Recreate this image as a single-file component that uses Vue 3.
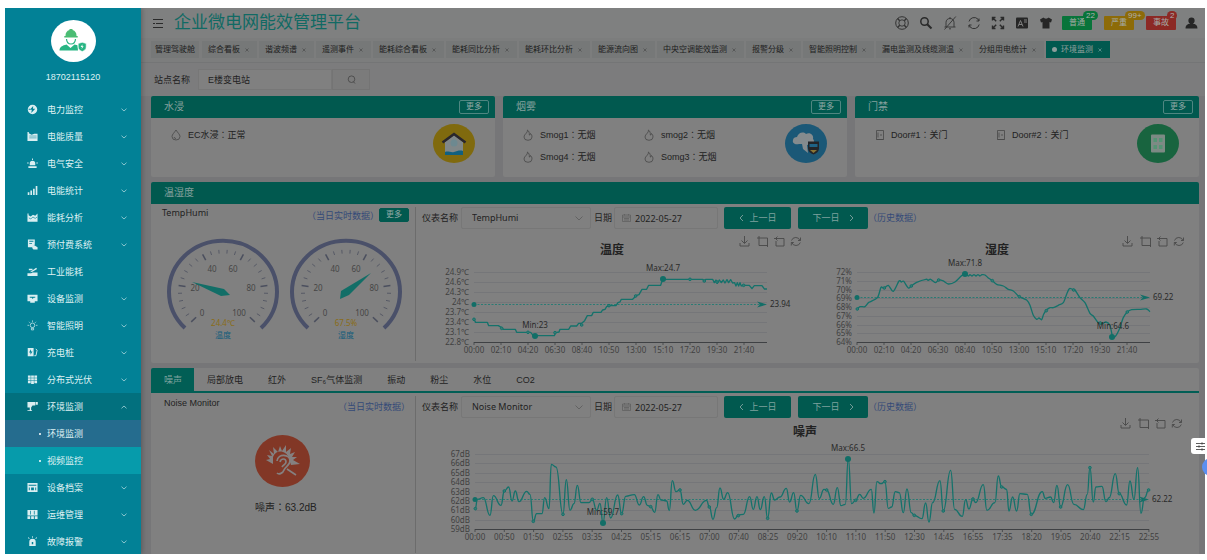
<script setup>
import { ref } from 'vue'

const menu = [
  { name: '电力监控', icon: 'bolt', fold: 'down' },
  { name: '电能质量', icon: 'quality', fold: 'down' },
  { name: '电气安全', icon: 'siren', fold: 'down' },
  { name: '电能统计', icon: 'bars', fold: 'down' },
  { name: '能耗分析', icon: 'trend', fold: 'down' },
  { name: '预付费系统', icon: 'prepay', fold: 'down' },
  { name: '工业能耗', icon: 'factory' },
  { name: '设备监测', icon: 'monitor', fold: 'down' },
  { name: '智能照明', icon: 'lamp', fold: 'down' },
  { name: '充电桩', icon: 'charger', fold: 'down' },
  { name: '分布式光伏', icon: 'solar', fold: 'down' },
  { name: '环境监测', icon: 'camera', fold: 'up', open: true, children: ['环境监测', '视频监控'] },
  { name: '设备档案', icon: 'archive', fold: 'down' },
  { name: '运维管理', icon: 'ops', fold: 'down' },
  { name: '故障报警', icon: 'alarm', fold: 'down' }
]

const icons = {
  bolt: '<path fill-rule="evenodd" d="M6 .8a5.2 5.2 0 1 1 0 10.400a5.200 5.200 0 0 1 0-10.400M6.800 2.200L3 6.400h2.300L4.600 9.800L9 5.300H6.500zM1.800 5.200h1.600v1H1.800z"/>',
  quality: '<path d="M.5 1h1.500v1.500L5 4l3-1h3.500v8H.5z"/><path d="M2.500 5.500h8M2.500 7.500h8" stroke="#028196" stroke-width=".6"/>',
  siren: '<path d="M3 8V6a3 3 0 0 1 6 0v2zM1.500 9h9v2h-9zM5.500.5h1v1.600h-1zM.2 5h1.600v1H.2zM10.200 5h1.600v1h-1.600z"/>',
  bars: '<path d="M.8 8h1.800v3H.8zM3.700 6h1.800v5H3.700zM6.600 4h1.800v7H6.600zM9.500 1h1.800v10H9.500z"/>',
  trend: '<path d="M.5 1.500h1.200v2L4 5l2.500-2L9 4l2.500-2.500V10.500H.5z"/><path d="M2 6.500l2.200 1 2.300-2L9 7l2-1.500" stroke="#028196" stroke-width=".7" fill="none"/>',
  prepay: '<path fill-rule="evenodd" d="M1 .5h7.500v5.600L6 9H1zM2.500 2v1h4.500V2zM2.500 4.500v1h3v-1z"/><path d="M7.500 6.500L11.500 9v2.500H7L5.500 9.500z"/>',
  factory: '<path d="M.5 11V8h4l1.500-1h5.500v4zM3 6.800L10 2l1 1.200-5 3.200zM2 3h4v1.500H2z"/>',
  monitor: '<path fill-rule="evenodd" d="M.5 2h11v7h-3v1.500h-5V9h-3zM3 4.200v1h2.200l1 1.300 1-1.300H9v-1z"/>',
  lamp: '<g fill="none" stroke="#d9eef1" stroke-width=".8"><circle cx="6" cy="5.800" r="2.500"/><path d="M4.800 9h2.400v1.800H4.800zM6 .5v1.500M.6 5.800h1.500M9.900 5.800h1.500M2.200 2l1 1M9.800 2l-1 1"/></g>',
  charger: '<path fill-rule="evenodd" d="M.8 1h6.400v9H.8zM4.200 2.500L2.300 6h1.500v2.500L6 5H4.500z"/><path d="M8 9.500h1.800L11 3.500 9.500 2" fill="none" stroke="#d9eef1"/>',
  solar: '<path d="M1 1.500h3v2.500H1zM4.500 1.500h3v2.500h-3zM8 1.500h3v2.500H8zM1 4.500h3v2.500H1zM4.500 4.500h3v2.500h-3zM8 4.500h3v2.500H8zM1 7.500h3V10H1zM4.500 7.500h3v3.500h-3zM8 7.500h3V10H8z"/>',
  camera: '<path d="M.5 1h8.500v4H6L4.500 7v4H3V7H.5zM9.500 1h2.300v3H9.500zM.5 10h5v1h-5z"/>',
  archive: '<path fill-rule="evenodd" d="M.5 1h11v10H.5zM1.800 3v1h8.400V3zM2 6v3h1V6zM4.500 6v3h3V6zM9 6v3h1V6z"/>',
  ops: '<path fill-rule="evenodd" d="M.5 1h11v6H.5zM3.500 2v4h.8V2zM7.500 2v4h.8V2zM.5 8h3v3h-3zM4.500 8h3v3h-3zM8.500 8h3v3h-3z"/>',
  alarm: '<path fill-rule="evenodd" d="M2.500 10.800V6.500a3.500 3.500 0 0 1 7 0v4.300zM5.200 6.500v2.600h1.600V6.500zM5.600.3h.9v1.700h-.9zM1 2l.7-.6 1.200 1.200-.7.6zM11 2l-.7-.6-1.200 1.200.7.6z"/>'
}

const pages = ['管理驾驶舱', '综合看板', '谐波频谱', '遥测事件', '能耗综合看板', '能耗同比分析', '能耗环比分析', '能源流向图', '中央空调能效监测', '报警分级', '智能照明控制', '漏电监测及线缆测温', '分组用电统计', '环境监测']

const alerts = [
  { name: '普通', count: '22', tone: 'green' },
  { name: '严重', count: '99+', tone: 'amber' },
  { name: '事故', count: '2', tone: 'red' }
]

const cards = [
  { title: '水浸', kind: 'drop', items: ['EC水浸：正常'] },
  { title: '烟雾', kind: 'flame', items: ['Smog1：无烟', 'smog2：无烟', 'Smog4：无烟', 'Somg3：无烟'] },
  { title: '门禁', kind: 'door', items: ['Door#1：关门', 'Door#2：关门'] }
]

const kinds = ['噪声', '局部放电', '红外', 'SF₆气体监测', '振动', '粉尘', '水位', 'CO2']

const station = ref('E楼变电站')
const meter = ref('TempHumi')
const noiseMeter = ref('Noise Monitor')
const day = ref('2022-05-27')
const noiseDay = ref('2022-05-27')

const polar = (deg, r) => {
  const a = (deg * Math.PI) / 180
  return [(62 + Math.cos(a) * r).toFixed(1), (58 - Math.sin(a) * r * 0.94).toFixed(1)]
}
const ticks = Array.from({ length: 26 }, (_, i) => {
  const deg = 225 - i * 10.8
  const major = i % 5 === 0
  const [x1, y1] = polar(deg, 45)
  const [x2, y2] = polar(deg, major ? 38 : 41)
  return { x1, y1, x2, y2, major }
})
const gaugeLabels = [['0', 41, 82], ['20', 34, 57], ['40', 51, 38], ['60', 72, 38], ['80', 90, 57], ['100', 78, 82]]
const gauges = [
  { name: '温度', value: '24.4℃', needle: '31,48 63,55 69,61 60,62' },
  { name: '湿度', value: '67.5%', needle: '87,39 65,61 56,65 57,57' }
]

const stepPath = 'M192,430 L197,439 H232 L236,449 H265 L275,455 L280,460 H316 L320,469 H362 L370,479 H433 L437,470 L447,468 L450,460 H476 L482,450 H500 L506,442 L515,442 L524,434 L532,419 H545 L550,409 H573 L578,402 L585,400 L590,392 L597,389 H618 L624,380 L630,378 L634,370 H668 L680,358 L687,356 L696,340 H710 L716,328 H752 L758,310 H878 L883,314 L888,310 H908 L913,320 L918,312 L922,322 L928,312 L934,320 L940,312 L945,321 L951,311 L956,320 L962,311 L968,321 L974,320 L978,330 L982,320 L986,330 L990,320 L994,330 L1000,328 H1018 L1026,338 L1033,329 H1056 L1063,339 H1071'

function curve(p) {
  let d = `M${p[0]}`
  for (let i = 0; i < p.length - 1; i++) {
    const a = p[i - 1] || p[i], b = p[i], c = p[i + 1], e = p[i + 2] || c
    d += ` C${b[0] + (c[0] - a[0]) / 7},${b[1] + (c[1] - a[1]) / 7} ${c[0] - (e[0] - b[0]) / 7},${c[1] - (e[1] - b[1]) / 7} ${c}`
  }
  return d
}
function wave(p) {
  let d = `M${p[0]}`
  for (let i = 1; i < p.length; i++) {
    const m = (p[i - 1][0] + p[i][0]) / 2
    d += ` C${m},${p[i - 1][1]} ${m},${p[i][1]} ${p[i]}`
  }
  return d
}

const humidity = [[172,399],[180,392],[195,392],[205,380],[212,377],[233,364],[243,334],[252,337],[265,328],[280,346],[297,315],[304,318],[311,316],[325,336],[334,330],[350,319],[378,310],[384,313],[392,310],[406,320],[416,312],[430,315],[445,324],[465,318],[485,299],[496,295],[505,300],[510,296],[516,300],[522,296],[528,300],[534,296],[540,300],[546,296],[555,297],[564,305],[577,314],[590,325],[610,330],[625,340],[640,345],[658,362],[680,372],[690,388],[700,418],[710,430],[717,426],[725,431],[731,415],[739,403],[750,395],[760,395],[775,388],[790,380],[800,355],[808,338],[818,340],[825,342],[840,365],[855,380],[870,412],[880,420],[893,438],[905,444],[918,438],[930,448],[938,483],[947,480],[958,460],[970,425],[982,408],[995,401],[1020,400],[1040,399],[1050,407]]
const noise = [[136,443],[142,415],[160,410],[180,463],[190,404],[213,433],[223,390],[236,378],[246,420],[256,390],[267,422],[290,391],[300,400],[310,481],[320,458],[336,458],[344,410],[357,443],[364,310],[378,318],[399,460],[409,356],[420,448],[432,428],[442,373],[453,425],[477,425],[487,415],[500,448],[510,427],[519,486],[530,410],[542,471],[563,402],[575,458],[587,406],[613,401],[628,432],[641,407],[652,433],[662,437],[674,454],[684,401],[693,417],[710,420],[718,449],[727,359],[738,392],[750,387],[760,430],[772,418],[796,448],[830,418],[838,438],[849,475],[860,440],[870,381],[881,415],[893,395],[914,474],[925,462],[940,460],[959,407],[970,445],[981,407],[991,446],[1003,407],[1013,472],[1024,396],[1034,417],[1050,408],[1069,382],[1079,423],[1091,395],[1101,450],[1112,403],[1137,428],[1156,340],[1168,412],[1182,385],[1190,387],[1210,430],[1222,380],[1233,434],[1246,430],[1255,293],[1265,428],[1277,418],[1289,400],[1300,412],[1324,385],[1332,456],[1341,362],[1353,368],[1365,362],[1375,442],[1385,438],[1396,392],[1408,395],[1420,455],[1431,384],[1444,455],[1453,463],[1476,473],[1487,426],[1497,483],[1508,425],[1530,359],[1540,450],[1562,328],[1574,445],[1597,466],[1607,416],[1617,444],[1629,414],[1637,425],[1660,371],[1671,448],[1695,425],[1705,345],[1715,377],[1730,385],[1737,450],[1748,408],[1760,450],[1770,398],[1792,400],[1804,460],[1837,392],[1846,412],[1862,408],[1871,425],[1881,373],[1892,438],[1913,371],[1932,430],[1960,446],[1972,400],[1980,320],[1990,423],[1998,378],[2016,376],[2028,422],[2038,410],[2056,338],[2068,398],[2090,432],[2100,360],[2112,415],[2123,320],[2133,457],[2144,410],[2156,387]]

const hours = ['00:00', '02:10', '04:20', '06:30', '08:40', '10:50', '13:00', '15:10', '17:20', '19:30', '21:40']
const noiseHours = ['00:00', '00:50', '01:50', '02:55', '03:35', '04:25', '05:15', '06:15', '07:00', '07:40', '08:25', '09:20', '10:10', '11:10', '11:50', '12:30', '14:45', '16:55', '17:35', '18:20', '19:05', '20:40', '22:15', '22:55']

const charts = [
  {
    title: '温度', width: 383, height: 132, titleX: 191, titleY: 22, toolX: 318, toolY: 4,
    left: 53, right: 346, top: 40, bottom: 110, marks: ['24.9℃', '24.6℃', '24.3℃', '24℃', '23.7℃', '23.4℃', '23.1℃', '22.8℃'], labelX: 48,
    xs: hours, pitch: 27, avgY: 72, avg: '23.94', shift: 'translate(-11 -56) scale(0.3333)', path: stepPath,
    dots: [[192,430],[275,457],[354,469],[435,470],[515,447],[597,389],[677,360],[840,310],[883,315],[921,318],[1001,328]],
    max: { x: 242, y: 47, tx: 242, ty: 39, text: 'Max:24.7' }, min: { x: 114, y: 104, tx: 114, ty: 96, text: 'Min:23' }
  },
  {
    title: '湿度', width: 383, height: 132, titleX: 193, titleY: 22, toolX: 318, toolY: 4,
    left: 53, right: 346, top: 40, bottom: 110, marks: ['72%', '71%', '70%', '69%', '68%', '67%', '66%', '65%', '64%'], labelX: 48,
    xs: hours, pitch: 27, avgY: 65, avg: '69.22', shift: 'translate(-4 -56) scale(0.3333)', path: curve(humidity),
    dots: [[172,399],[253,336],[334,330],[416,312],[577,314],[658,362],[739,404],[821,342],[901,441],[982,408]],
    max: { x: 161, y: 42, tx: 161, ty: 34, text: 'Max:71.8' }, min: { x: 308, y: 105, tx: 309, ty: 97, text: 'Min:64.6' }
  }
]
const noiseChart = {
  title: '噪声', width: 766, height: 137, titleX: 384, titleY: 18, toolX: 699, toolY: 0,
  left: 54, right: 728, top: 36, bottom: 111, marks: ['67dB', '66dB', '65dB', '64dB', '63dB', '62dB', '61dB', '60dB', '59dB'], labelX: 49,
  xs: noiseHours, pitch: 29.3, avgY: 81, avg: '62.22', shift: 'translate(9 -57) scale(0.3333)', path: wave(noise),
  dots: [[136,443],[223,390],[310,481],[399,460],[487,415],[575,458],[662,437],[750,387],[838,438],[925,464],[1013,472],[1101,450],[1190,387],[1277,418],[1365,362],[1453,463],[1540,450],[1629,414],[1715,378],[1804,460],[1892,438],[1980,320],[2068,398],[2156,387]],
  max: { x: 427, y: 41, tx: 427, ty: 33, text: 'Max:66.5' }, min: { x: 182, y: 105, tx: 182, ty: 97, text: 'Min:59.7' }
}
const rows = [
  { key: 'temp', charts },
  { key: 'noise', charts: [noiseChart] }
]
const gridY = (c, i) => Math.round(c.top + ((c.bottom - c.top) * i) / (c.marks.length - 1)) + 0.5
</script>

<template>
  <div class="screen">
    <div class="app">
      <aside class="side">
        <div class="avatar">
          <svg viewBox="0 0 30 26" width="30" height="26">
            <g fill="#27b583">
              <path d="M7.500 8a5.500 6 0 0 1 4-6V1h3v1a5.500 6 0 0 1 4 6h1.200v1.500H6.300V8z" fill="#4bbd74" />
              <path d="M8.500 11c.2 3 2 5 4.500 5s4.300-2 4.500-5" fill="none" stroke="#27b583" stroke-width="1.200" />
              <path d="M1.500 22.500c0-3.500 3-5 7-6l4 3.500 4-3.500 3 .8.500 5.200z" />
              <path d="M20.200 15.500l4-1.200 4 1.200v3.500c0 2.500-2 3.700-4 4.500-2-.8-4-2-4-4.500z" stroke="#fff" stroke-width=".6" />
            </g>
            <path d="M24.500 16.300l-1.900 2.700h1.400l-.4 2 2-2.700h-1.300z" fill="#fff" />
          </svg>
        </div>
        <div class="phone">18702115120</div>
        <nav class="menu">
          <template v-for="m in menu" :key="m.name">
            <a href="#" class="entry" :class="{ open: m.open }">
              <svg class="glyph" viewBox="0 0 12 12" v-html="icons[m.icon]"></svg>
              <span>{{ m.name }}</span>
              <svg v-if="m.fold" class="fold" :class="m.fold" viewBox="0 0 6 4"><path d="M.5 .7L3 3L5.500 .7" /></svg>
            </a>
            <a v-for="(c, i) in m.children || []" :key="c" href="#" class="entry sub" :class="i ? 'hover' : 'current'">
              <i class="bullet"></i><span>{{ c }}</span>
            </a>
          </template>
        </nav>
      </aside>

      <div class="main">
        <header class="top">
          <button class="bare" aria-label="菜单">
            <svg viewBox="0 0 10 9" width="10" height="9" stroke="#2a2a2a" fill="none"><path d="M0 .5h10M3 4.500h7M0 8.500h10M0 4.500h2" /></svg>
          </button>
          <h1>企业微电网能效管理平台</h1>
          <div class="tools">
            <svg viewBox="0 0 14 14" width="14" height="14" fill="none" stroke="#333"><circle cx="7" cy="7" r="6.300" stroke-width="1" /><circle cx="7" cy="7" r="3.200" stroke-width=".9" /><path d="M4.700 4.700L2.600 2.600M9.300 4.700l2.100-2.100M4.700 9.300l-2.100 2.100M9.300 9.300l2.100 2.100" stroke-width="1.400" /></svg>
            <svg viewBox="0 0 14 14" width="14" height="14" fill="none" stroke="#2a2a2a"><circle cx="5.500" cy="5.500" r="3.700" stroke-width="1.500" /><path d="M8.200 8.200L12.500 12.500" stroke-width="2" /></svg>
            <svg viewBox="0 0 14 14" width="14" height="14" fill="none" stroke="#333" stroke-width=".9"><path d="M3 11V6.500C3 4 4.700 2.500 7 2.500S11 4 11 6.500V11M1.500 11h11M6 12.800h2M7 1v1.500M12.800 .5L1.500 13.500" /></svg>
            <svg viewBox="0 0 14 14" width="14" height="14" fill="none" stroke="#333" stroke-width="1"><path d="M2 5.500A5.300 5.300 0 0 1 11 3.200L12 5M12 2.500V5H9.500M12.200 8.500A5.300 5.300 0 0 1 3 10.800L2 9M2 11.500V9H4.500" /></svg>
            <svg viewBox="0 0 14 14" width="14" height="14" fill="none" stroke="#2a2a2a" stroke-width="1.400"><path d="M1.500 4.500V1.500h3M1.500 1.500l3.700 3.700M9.500 1.500h3v3M12.500 1.500L8.800 5.200M1.500 9.500v3h3M1.500 12.500l3.700-3.700M12.500 9.500v3h-3M12.500 12.500L8.800 8.800" /></svg>
            <svg viewBox="0 0 14 14" width="14" height="14"><rect x="1" y="1.500" width="12" height="11" rx="1" fill="#262626" /><path d="M3 10.500L5.500 4.500 8 10.500M4 8.500h3M9 4h3M9 6h3" stroke="#808080" fill="none" /></svg>
            <svg viewBox="0 0 14 14" width="14" height="14"><path d="M4.500 1.500L1 3.500l1 3 1.500-.5v6.500h7V6l1.500.5 1-3-3.500-2c-1 1.500-4 1.500-5 0z" fill="#262626" /></svg>
          </div>
          <div class="alerts">
            <button v-for="a in alerts" :key="a.name" class="alert" :class="a.tone">{{ a.name }}<span class="badge">{{ a.count }}</span></button>
          </div>
          <svg class="user" viewBox="0 0 12 11"><path d="M6 .5a2.600 2.600 0 0 1 0 5.800a2.600 2.600 0 0 1 0-5.800M.5 10.500c0-3 2-4 4-4.200h3c2 .2 4 1.200 4 4.200z" fill="#262626" /></svg>
        </header>

        <nav class="pages">
          <a v-for="(p, i) in pages" :key="p" href="#" class="page" :class="{ active: i === pages.length - 1 }">
            <i v-if="i === pages.length - 1" class="dot"></i>
            {{ p }}
            <svg v-if="i" viewBox="0 0 4 4" width="4" height="4"><path d="M.5 .5l3 3M3.500 .5l-3 3" stroke="currentColor" stroke-width=".6" /></svg>
          </a>
        </nav>

        <div class="query">
          <label for="station">站点名称</label>
          <input id="station" v-model="station" class="station" />
          <button class="search" aria-label="搜索">
            <svg viewBox="0 0 9 9" width="9" height="9" fill="none" stroke="#444" stroke-width=".8"><circle cx="4.500" cy="4.200" r="3.300" /><path d="M6.500 6.800l1.500 1.700" /></svg>
          </button>
        </div>

        <section class="cards">
          <article v-for="c in cards" :key="c.title" class="card">
            <h2 class="bar">{{ c.title }}<button class="more">更多</button></h2>
            <div class="state">
              <ul :class="c.kind">
                <li v-for="s in c.items" :key="s">
                  <svg viewBox="0 0 10 12" width="10" height="12" fill="none" stroke="#484848" stroke-width=".8">
                    <path v-if="c.kind === 'drop'" d="M5 1C3.500 3.500 1 5.500 1 7.500a4 3.500 0 0 0 8 0C9 5.500 6.500 3.500 5 1zM3 8a2 2 0 0 0 2 1.500" />
                    <path v-else-if="c.kind === 'flame'" d="M4.500 1C5 4 1 5 1 8a4 3.300 0 0 0 8 0C9 6.500 8.500 5.500 7.500 4.500 7.500 5.500 7 6 6.300 6 6.500 4 6 2 4.500 1z" />
                    <path v-else d="M1.500 1.500h7v9h-7zM1.500 10.500h7M6 5v2M3 3.500v5" />
                  </svg>{{ s }}
                </li>
              </ul>
              <svg class="disc" viewBox="0 0 42 39">
                <g v-if="c.kind === 'drop'">
                  <ellipse cx="21" cy="19.500" rx="21" ry="19.500" fill="#806a0e" />
                  <path d="M12 18l9-7 9 7v12H12z" fill="#808788" />
                  <circle cx="21" cy="19" r="3.500" fill="#6d8990" />
                  <path d="M9.500 18.500L21 10l11.500 8.500" fill="none" stroke="#29262c" stroke-width="2.600" />
                  <path d="M12 28c3-1.500 6 1 9 0s6-2 9-1v4H12z" fill="#10607f" />
                </g>
                <g v-else-if="c.kind === 'flame'">
                  <ellipse cx="21" cy="19.500" rx="21" ry="19.500" fill="#1b5877" />
                  <path d="M14 20c-4 1-7-1-6-4 0-2 2-3 4-3 1-4 6-6 9-3 4-2 8 1 7 5 2 2 1 5-2 5l-4 1 1 8-5-4-1-5z" fill="#858b8e" />
                  <path d="M23 17.500h11v7c0 3-2.500 5-5.500 6-3-1-5.500-3-5.500-6z" fill="#232529" />
                  <path d="M24.500 20h8v3h-8z" fill="#1f6386" /><path d="M25 26h7l-3.500 3z" fill="#8a7636" />
                </g>
                <g v-else>
                  <ellipse cx="21" cy="19.500" rx="21" ry="19.500" fill="#18643f" />
                  <rect x="14" y="10.500" width="14" height="18" rx="1" fill="#7d8a84" />
                  <path d="M16.500 14h3.500v4h-3.500zM22 14h3.500v4H22zM16.500 21h3.500v4h-3.500zM22 21h3.500v4H22z" fill="#559474" />
                </g>
              </svg>
            </div>
          </article>
        </section>

        <section v-for="r in rows" :key="r.key" class="card block" :class="r.key">
          <h2 v-if="r.key === 'temp'" class="bar">温湿度</h2>
          <div v-else class="kinds" role="tablist">
            <button v-for="(k, i) in kinds" :key="k" role="tab" class="kind" :class="{ active: !i }">{{ k }}</button>
          </div>
          <div class="split">
            <div class="live">
              <div class="livehead">
                <span class="name">{{ r.key === 'temp' ? 'TempHumi' : 'Noise Monitor' }}</span>
                <a href="#" class="link">（当日实时数据）</a>
                <button v-if="r.key === 'temp'" class="more solid">更多</button>
              </div>
              <div v-if="r.key === 'temp'" class="gauges">
                <svg v-for="g in gauges" :key="g.name" viewBox="0 0 123 112">
                  <path d="M24 94A54 51 0 1 1 100 94" fill="none" stroke="#4a5069" stroke-width="4" />
                  <line v-for="(t, i) in ticks" :key="i" :x1="t.x1" :y1="t.y1" :x2="t.x2" :y2="t.y2" stroke="#4b4f5e" :stroke-width="t.major ? 1.5 : 0.8" />
                  <text v-for="l in gaugeLabels" :key="l[0]" :x="l[1]" :y="l[2]" class="mark">{{ l[0] }}</text>
                  <polygon :points="g.needle" fill="#126e67" />
                  <text x="62" y="92" class="mark value">{{ g.value }}</text>
                  <text x="62" y="104" class="mark label">{{ g.name }}</text>
                </svg>
              </div>
              <div v-else class="ear">
                <svg viewBox="0 0 55 52" width="55" height="52">
                  <ellipse cx="27.500" cy="26" rx="27.500" ry="26" fill="#823726" />
                  <path d="M18 29l-7-4 4-1-3-4 5 1-3-6 5 4-1-7 5 5 2-6 2 5 4-6 0 7 5-4-1 6 5-2-3 5 5 0-4 3 7 4-9 1-2-7c-3-8-13-9-16-1z" fill="#858080" />
                  <path d="M22 26c1-8 13-7 13 0 0 4-5 6-6 9s-5 5-7 3M25 27c1-4 6-4 6 0 0 2-3 3-4 5M32 34l9 6" fill="none" stroke="#858080" stroke-width="1.700" />
                </svg>
                <p>噪声：63.2dB</p>
              </div>
            </div>

            <div class="history">
              <div class="filters">
                <label :for="r.key + '-meter'">仪表名称</label>
                <span class="picker">
                  <select v-if="r.key === 'temp'" id="temp-meter" v-model="meter"><option>TempHumi</option></select>
                  <select v-else id="noise-meter" v-model="noiseMeter"><option>Noise Monitor</option></select>
                  <svg viewBox="0 0 8 5" width="8" height="5"><path d="M.5 .5L4 4L7.500 .5" fill="none" stroke="#5a5a5a" stroke-width=".8" /></svg>
                </span>
                <label :for="r.key + '-day'">日期</label>
                <span class="date">
                  <svg viewBox="0 0 9 8" width="9" height="8" fill="none" stroke="#5c5c5c" stroke-width=".7"><path d="M.5 1h8v6.500h-8zM.5 3h8M2.500 0v1.500M6.500 0v1.500M2 4.500h5M2 6h5" /></svg>
                  <input v-if="r.key === 'temp'" id="temp-day" v-model="day" />
                  <input v-else id="noise-day" v-model="noiseDay" />
                </span>
                <button class="step prev"><svg viewBox="0 0 5 8" width="5" height="8"><path d="M4 1L1 4l3 3" /></svg>上一日</button>
                <button class="step next">下一日<svg viewBox="0 0 5 8" width="5" height="8"><path d="M1 1l3 3-3 3" /></svg></button>
                <a href="#" class="link">（历史数据）</a>
              </div>
              <div class="plots">
                <svg v-for="c in r.charts" :key="c.title" :viewBox="`0 0 ${c.width} ${c.height}`">
                  <text :x="c.titleX" :y="c.titleY" class="title">{{ c.title }}</text>
                  <g :transform="`translate(${c.toolX} ${c.toolY})`" fill="none" stroke="#484848" stroke-width=".9">
                    <path d="M5.500 0v7M2.500 4.500l3 3 3-3M1 7v3h9V7" />
                    <path d="M20 0v9.500h9M18 2h10.500v9M20 2" />
                    <path d="M37 2.500h8v7.500h-8V5M35 2.500h3M38.500 .5l-2 2 2 2" />
                    <path d="M52.500 4.500a4.500 4.500 0 0 1 8.500 0M61.300 6.500a4.500 4.500 0 0 1-8.500 0M61.500 1.500v3h-2.500M52.300 9.500v-3h2.500" />
                  </g>
                  <g v-for="(m, i) in c.marks" :key="m">
                    <line v-if="i < c.marks.length - 1" :x1="c.left" :x2="c.right" :y1="gridY(c, i)" :y2="gridY(c, i)" stroke="#757679" />
                    <text :x="c.labelX" :y="gridY(c, i) + 2.5" class="axis end">{{ m }}</text>
                  </g>
                  <line :x1="c.left" :x2="c.right" :y1="gridY(c, c.marks.length - 1)" :y2="gridY(c, c.marks.length - 1)" stroke="#3f4144" />
                  <g v-for="(x, i) in c.xs" :key="x">
                    <line :x1="c.left + i * c.pitch" :x2="c.left + i * c.pitch" :y1="c.bottom" :y2="c.bottom + 3" stroke="#3f4144" stroke-width=".8" />
                    <text :x="c.left + i * c.pitch" :y="c.bottom + 11" class="axis mid">{{ x }}</text>
                  </g>
                  <line :x1="c.left" :x2="c.right - 3" :y1="c.avgY + 0.5" :y2="c.avgY + 0.5" stroke="#157a71" stroke-width=".8" stroke-dasharray="2 1.500" />
                  <circle :cx="c.left" :cy="c.avgY + 0.5" r="2.500" fill="#126e67" />
                  <polygon :points="`${c.right},${c.avgY + 0.5} ${c.right - 10},${c.avgY - 2.5} ${c.right - 7},${c.avgY + 0.5} ${c.right - 10},${c.avgY + 3.5}`" fill="#126e67" />
                  <text :x="c.right + 3" :y="c.avgY + 3" class="axis dark">{{ c.avg }}</text>
                  <g :transform="c.shift" fill="none" stroke="#15726b">
                    <path :d="c.path" stroke-width="4" stroke-linejoin="round" />
                    <circle v-for="d in c.dots" :key="d[0]" :cx="d[0]" :cy="d[1]" r="4" stroke-width="3" fill="#3c7a75" />
                  </g>
                  <g v-for="p in [c.max, c.min]" :key="p.text">
                    <circle :cx="p.x" :cy="p.y" r="3" fill="#126e67" />
                    <text :x="p.tx" :y="p.ty" class="axis mid dark">{{ p.text }}</text>
                  </g>
                </svg>
              </div>
            </div>
          </div>
        </section>
      </div>
    </div>

    <div class="floating">
      <button class="setting" aria-label="设置">
        <svg viewBox="0 0 9 9" width="9" height="9" stroke="#333" stroke-width=".8"><path d="M0 1.500h9M0 4.500h9M0 7.500h9M6 .3v2.400M3 3.300v2.400M6 6.300v2.400" /></svg>
      </button>
      <i class="ball"></i>
    </div>
  </div>
</template>

<style>
body { background: #fff; }
</style>

<style scoped>
.screen {
  position: relative;
  overflow: hidden;
  padding: 8px 2px 6px 5px;
  font: 9px/12px "Liberation Sans", "Noto Sans CJK SC", sans-serif;
  color: #222;
}
.screen *, .screen { box-sizing: border-box; }
button, input, select { font: inherit; color: inherit; border: 0; margin: 0; padding: 0; background: none; border-radius: 0; }
button { cursor: pointer; }
a { color: inherit; text-decoration: none; }
h1, h2, p, ul { margin: 0; padding: 0; font-weight: 400; list-style: none; }
svg { flex: none; display: block; }
.app { display: flex; height: calc(100vh - 14px); min-height: 546px; overflow: hidden; background: #767678; }

.side { flex: none; width: 136px; background: #028196; color: #dff1f3; display: flex; flex-direction: column; align-items: center; z-index: 1; box-shadow: 1px 0 5px rgba(0, 0, 0, .25); }
.avatar { flex: none; margin-top: 12px; width: 45px; height: 42px; border-radius: 50%; background: #fff; display: flex; align-items: center; justify-content: center; }
.phone { margin-top: 9px; }
.menu { align-self: stretch; margin-top: 13px; }
.entry { display: flex; align-items: center; gap: 9px; height: 27px; padding: 0 14px 0 22px; }
.entry.open { background: #02707e; }
.entry.sub { padding-left: 34px; gap: 6px; }
.entry.current { background: #256c8e; }
.entry.hover { background: #069bab; }
.bullet { width: 2px; height: 2px; background: #fff; border-radius: 1px; }
.glyph { width: 11px; height: 11px; fill: #d9eef1; }
.fold { width: 6px; height: 4px; margin-left: auto; fill: none; stroke: #a9d5dc; stroke-width: .8; }
.fold.up { transform: rotate(180deg); }

.main { flex: 1; min-width: 0; }
.top { display: flex; align-items: center; height: 30px; padding: 0 7px 0 12px; background: #7f8080; }
.top h1 { margin-left: 11px; font-size: 17px; line-height: 22px; color: #116a64; }
.bare { display: flex; }
.tools { display: flex; gap: 10px; margin-left: auto; }
.alerts { display: flex; gap: 12px; margin: 0 9px; }
.alert { position: relative; width: 30px; height: 14px; border-radius: 1px; font-size: 8px; line-height: 14px; color: #a4aaa5; }
.badge { position: absolute; left: 21px; top: -5px; height: 9px; min-width: 9px; padding: 0 3px; border-radius: 5px; line-height: 9px; font-size: 8px; color: #b0b0b0; }
.green, .green .badge { background: #08743a; }
.amber, .amber .badge { background: #8d6b08; }
.red, .red .badge { background: #8c2925; }
.user { width: 13px; height: 12px; }

.pages { display: flex; gap: 2px; height: 25px; padding: 3px 10px 4px 10px; background: #7c7d7d; border-bottom: 1px solid #747576; }
.page { flex: none; display: flex; align-items: center; gap: 5px; padding: 0 8px 0 6px; background: #767878; font-size: 8px; white-space: nowrap; color: #1d1d1d; }
.page:first-child { padding: 0 4px; margin-right: 1px; }
.page svg { color: #444; }
.page.active { background: #01594f; color: #909f9d; gap: 4px; }
.page.active svg { color: #8aa; margin-left: 1px; }
.dot { width: 5px; height: 5px; border-radius: 50%; background: #8d9d9b; }

.query { display: flex; align-items: center; height: 33px; padding-left: 13px; background: #7c7c7d; }
.station { width: 134px; height: 21px; margin-left: 8px; padding: 0 9px; border: 1px solid #777; background: #808080; }
.search { width: 38px; height: 21px; border: 1px solid #747474; background: #7b7b7b; display: flex; align-items: center; justify-content: center; }

.cards { display: grid; grid-template-columns: repeat(3, 1fr); gap: 8px; padding: 0 6px 0 10px; background: #767678; }
.card { background: #808080; border-radius: 2px; overflow: hidden; }
.bar { display: flex; align-items: center; justify-content: space-between; height: 22px; padding: 0 6px 0 13px; background: #01594f; color: #83a09d; font-size: 10px; }
.more { width: 30px; height: 14px; border: 1px solid #4f8681; border-radius: 2px; font-size: 8px; line-height: 12px; color: #8fa8a5; }
.more.solid { background: #01594f; border-color: #01594f; }
.state { display: flex; justify-content: space-between; height: 59px; padding: 6px 20px; }
.state ul { display: flex; flex-wrap: wrap; align-content: flex-start; flex: 1; }
.state li { display: flex; align-items: center; gap: 7px; width: 121px; height: 22px; }
.state li, .ear p { font-family: "Liberation Sans", "Noto Sans CJK TC", "Noto Sans CJK SC", sans-serif; }
.state .door li { gap: 6px; }
.disc { width: 42px; height: 39px; }

.block { margin: 5px 6px 0 10px; }
.split { display: flex; height: 159px; }
.noise .split { height: 162px; }
.live { flex: none; width: 265px; margin: 3px 0 2px; border-right: 1px solid #6c6c6c; }
.livehead { display: flex; align-items: center; height: 15px; padding-left: 11px; }
.livehead .name { font-family: "Noto Sans", sans-serif; margin-bottom: 4px; }
.noise .name { font-family: "Liberation Sans", sans-serif; margin-left: 2px; }
.livehead .link { margin-left: auto; padding-top: 2px; }
.noise .livehead { height: 17px; }
.noise .livehead .link { margin-right: 5px; padding-top: 4px; }
.more.solid { margin-right: 6px; }
.link { color: #344a78; white-space: nowrap; }
.gauges { display: flex; padding: 12px 8px 0 10px; }
.gauges svg { flex: 1; min-width: 0; }
.mark { font: 8px "Noto Sans", "Noto Sans CJK SC", sans-serif; fill: #464646; text-anchor: middle; }
.mark.value { fill: #8a6c17; }
.mark.label { fill: #145d7c; }
.ear { padding: 22px 0 0 104px; font-size: 10px; line-height: 14px; }
.ear p { margin-top: 14px; }

.history { flex: 1; min-width: 0; padding-right: 12px; }
.filters { display: flex; align-items: center; height: 28px; padding: 3px 0 3px 6px; }
.filters label { white-space: nowrap; }
.picker, .date { position: relative; display: flex; align-items: center; height: 22px; border: 1px solid #777; border-radius: 2px; font-family: "Noto Sans", "Noto Sans CJK SC", sans-serif; }
.picker { width: 130px; margin: 0 3px; }
.picker select { appearance: none; width: 100%; height: 20px; padding: 0 18px 0 10px; }
.picker svg { position: absolute; right: 7px; pointer-events: none; }
.date { width: 104px; margin: 0 6px 0 2px; padding-left: 7px; gap: 4px; }
.date input { flex: 1; min-width: 0; height: 20px; }
.step { display: flex; align-items: center; justify-content: center; gap: 6px; height: 22px; width: 67px; border-radius: 2px; background: #01594f; color: #7fa29e; }
.step.next { width: 70px; margin-left: 7px; gap: 9px; }
.step svg { fill: none; stroke: #7fa29e; stroke-width: .9; }
.plots { display: flex; padding-left: 5px; }
.plots svg { flex: 1; min-width: 0; }
.title { font: bold 12px "Noto Sans CJK SC", sans-serif; fill: #222; text-anchor: middle; }
.axis { font: 8px "Noto Sans", "Noto Sans CJK SC", sans-serif; fill: #414141; }
.axis.end { text-anchor: end; }
.axis.mid { text-anchor: middle; }
.axis.dark { fill: #2a2a2a; }

.kinds { display: flex; height: 25px; border-bottom: 2px solid #015e55; }
.kind { padding: 0 12px 0 13px; height: 23px; }
.kind.active { background: #015e55; color: #7fa29e; }
.noise .filters { height: 25px; padding-bottom: 0; }

.floating { position: absolute; right: 0; top: 438px; width: 16px; height: 40px; z-index: 2; overflow: hidden; }
.setting { width: 16px; height: 16px; padding-left: 5px; background: #fff; border-radius: 3px 0 0 3px; display: flex; align-items: center; }
.ball { position: absolute; left: 11px; top: 20px; width: 18px; height: 18px; border-radius: 50%; background: #5b8ff0; }
</style>
